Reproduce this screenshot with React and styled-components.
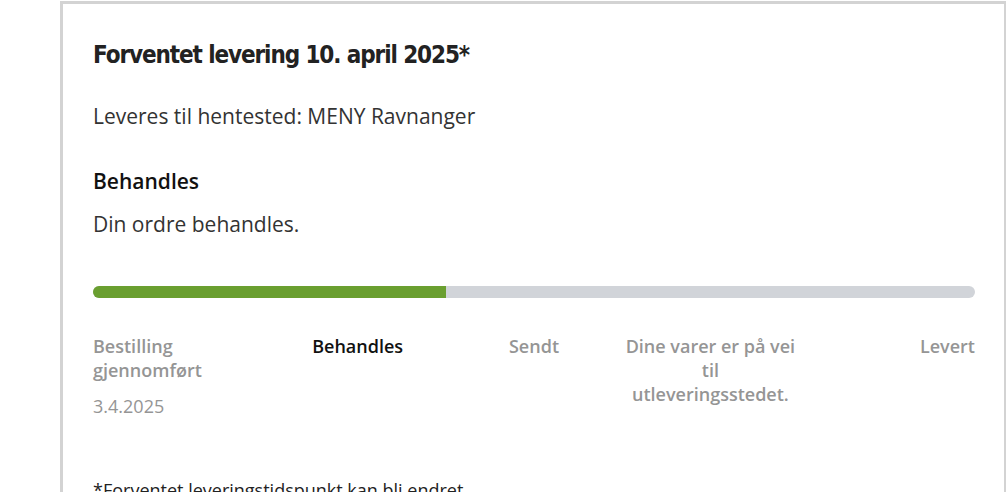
import React from 'react';
import styled, { createGlobalStyle } from 'styled-components';

const GlobalStyle = createGlobalStyle`
    body {
        margin: 0;
        background: #fff;
        font-family: "Open Sans", "Noto Sans", sans-serif;
        overflow: hidden;
    }
`;

const steps = [
    { label: 'Bestilling gjennomført', date: '3.4.2025', align: 'left' },
    { label: 'Behandles', active: true, align: 'center' },
    { label: 'Sendt', align: 'center' },
    { label: 'Dine varer er på vei til utleveringsstedet.', align: 'center' },
    { label: 'Levert', align: 'right' },
];

const OrderStatus = () => {
    return (
        <Page>
            <GlobalStyle />
            <Card>
                <Title>Forventet levering 10. april 2025*</Title>
                <Text>Leveres til hentested: MENY Ravnanger</Text>
                <StatusTitle>Behandles</StatusTitle>
                <Text $tight>Din ordre behandles.</Text>
                <Track>
                    <Fill style={{ width: '40%' }} />
                </Track>
                <Steps>
                    {steps.map((s) => (
                        <Step key={s.label} $align={s.align}>
                            <StepLabel $active={s.active}>{s.label}</StepLabel>
                            {s.date && <StepDate>{s.date}</StepDate>}
                        </Step>
                    ))}
                </Steps>
                <Note>*Forventet leveringstidspunkt kan bli endret</Note>
            </Card>
        </Page>
    );
};

const Page = styled.div`
    padding: 1px 0 0 60px;
    height: 492px;
    box-sizing: border-box;
`;

const Card = styled.div`
    width: 946px;
    box-sizing: border-box;
    border: 3px solid #d3d3d3;
    border-right-width: 2px;
    border-bottom: none;
    padding: 34px 29px 0 30px;
    min-height: 500px;
`;

const Title = styled.h1`
    margin: 0;
    font-family: "DejaVu Sans Condensed", "DejaVu Sans", sans-serif;
    font-weight: 700;
    font-size: 24px;
    letter-spacing: -1.1px;
    line-height: 34px;
    color: #222;
`;

const Text = styled.p`
    margin: ${(p) => (p.$tight ? '15px 0 0' : '29px 0 0')};
    font-size: 21px;
    line-height: 30px;
    color: #333;
`;

const StatusTitle = styled.h2`
    margin: 37px 0 0;
    font-size: 21px;
    font-weight: 600;
    line-height: 26px;
    color: #111;
`;

const Track = styled.div`
    margin-top: 47px;
    height: 12px;
    border-radius: 6px;
    background: #d1d4d9;
    overflow: hidden;
`;

const Fill = styled.div`
    height: 100%;
    background: #6a9f30;
`;

const Steps = styled.div`
    display: grid;
    grid-template-columns: repeat(5, 1fr);
    margin-top: 36px;
`;

const Step = styled.div`
    text-align: ${(p) => p.$align};
`;

const StepLabel = styled.div`
    font-size: 18px;
    font-weight: 600;
    line-height: 24px;
    color: ${(p) => (p.$active ? '#111' : '#959595')};
`;

const StepDate = styled.div`
    margin-top: 12px;
    font-size: 18px;
    line-height: 24px;
    color: #959595;
`;

const Note = styled.p`
    margin: 59px 0 0;
    font-size: 18px;
    line-height: 26px;
    color: #222;
`;

export default OrderStatus;
